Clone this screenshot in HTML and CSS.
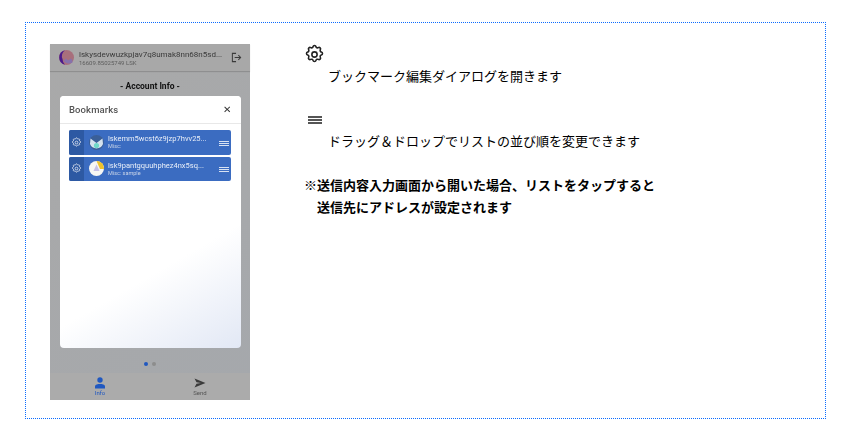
FILE: index.html
```html
<!DOCTYPE html>
<html lang="ja">
<head>
<meta charset="utf-8">
<title>Bookmarks</title>
<link rel="stylesheet" href="styles.css">
</head>
<body>
<main class="panel">
  <section class="phone">
    <header class="topbar">
      <svg class="avatar" viewBox="0 0 15 15"><circle cx="7.500" cy="7.500" r="7.500" fill="#a86f7c"/><path d="M6 .2A7.500 7.500 0 0 0 6 14.800 8 8 0 0 1 3.500 9 7 7 0 0 1 6 .2Z" fill="#4b1a8c"/><path d="M4.500 11a7 7 0 0 0 9 1.500 5 5 0 0 0-1.500-4l-3 2-2-2Z" fill="#8672ac"/></svg>
      <div class="acct">
        <div class="acct-addr">lskysdevwuzkpjav7q8umak8nn68n5sd...</div>
        <div class="acct-bal">16609.85025749 LSK</div>
      </div>
      <svg class="logout" viewBox="0 0 24 24" fill="none" stroke="#3a3a3a" stroke-width="2.200"><path d="M11 3H3v18h8M8 12h13M16 7l5 5-5 5"/></svg>
    </header>
    <div class="phone-title">- Account Info -</div>
    <div class="modal">
      <div class="modal-head"><span>Bookmarks</span><span class="close">✕</span></div>
      <div class="list">
        <div class="item">
          <div class="item-gear"><svg class="ico-gear" viewBox="0 0 24 24"><use href="#gear"/></svg></div>
          <svg class="item-ava" viewBox="0 0 15 15"><circle cx="7.500" cy="7.500" r="7.500" fill="#3a5f98"/><path d="M1.500 3.500 7.500 8 13.500 3.500 14 9a7 7 0 0 1-13 0Z" fill="#d4e2ee"/><circle cx="7.500" cy="10.500" r="2.600" fill="#6fd8c8"/></svg>
          <div class="item-text"><div class="item-addr">lskemm5wcst6z9jzp7hvv25...</div><div class="item-sub">Misc:</div></div>
          <div class="item-menu"><i></i><i></i><i></i></div>
        </div>
        <div class="item">
          <div class="item-gear"><svg class="ico-gear" viewBox="0 0 24 24"><use href="#gear"/></svg></div>
          <svg class="item-ava" viewBox="0 0 15 15"><circle cx="7.500" cy="7.500" r="7.500" fill="#f6f6f3"/><path d="M7.500 0A7.500 7.500 0 0 1 15 8H11Z" fill="#eec22c"/><path d="M7.500 3.500 10.500 10H4.500Z" fill="#c4bfe6"/></svg>
          <div class="item-text"><div class="item-addr">lsk9pantgquuhphez4nx5sq...</div><div class="item-sub">Misc: sample</div></div>
          <div class="item-menu"><i></i><i></i><i></i></div>
        </div>
      </div>
    </div>
    <div class="dots"><i class="dot on"></i><i class="dot"></i></div>
    <nav class="tabs">
      <div class="tab on">
        <svg viewBox="0 0 12 12"><circle cx="6" cy="3" r="2.700" fill="#2058c0"/><path d="M1 11.500V9.500C1 7.500 4 7 6 7s5 .5 5 2.500v2Z" fill="#2058c0"/></svg>
        <span>Info</span>
      </div>
      <div class="tab">
        <svg viewBox="0 0 12 12"><path d="M.5 1.500 11.500 6 .5 10.500 2.500 6.800 7 6 2.500 5.200Z" fill="#3a3a3a"/></svg>
        <span>Send</span>
      </div>
    </nav>
  </section>
  <section class="notes">
    <svg class="note-gear" viewBox="0 0 24 24"><use href="#gear"/></svg>
    <p class="note">ブックマーク編集ダイアログを開きます</p>
    <div class="note-menu"><i></i><i></i><i></i></div>
    <p class="note">ドラッグ＆ドロップでリストの並び順を変更できます</p>
    <p class="warn">※送信内容入力画面から開いた場合、リストをタップすると<br><span class="warn-indent">送信先にアドレスが設定されます</span></p>
  </section>
</main>
<svg class="defs" width="0" height="0">
  <symbol id="gear" viewBox="0 0 24 24"><g fill="none" stroke="currentColor" stroke-width="1.800" stroke-linejoin="round"><path d="M10.300 3.100c.4-1.800 3-1.800 3.400 0a1.750 1.750 0 0 0 2.600 1.100c1.500-.9 3.300.8 2.400 2.400a1.750 1.750 0 0 0 1.100 2.600c1.800.4 1.800 3 0 3.400a1.750 1.750 0 0 0-1.100 2.600c.9 1.500-.9 3.300-2.400 2.400a1.750 1.750 0 0 0-2.600 1.100c-.4 1.800-3 1.800-3.400 0a1.750 1.750 0 0 0-2.600-1.100c-1.500.9-3.300-.9-2.400-2.400a1.750 1.750 0 0 0-1.100-2.600c-1.800-.4-1.800-3 0-3.400a1.750 1.750 0 0 0 1.100-2.600c-.9-1.600.9-3.300 2.400-2.400a1.750 1.750 0 0 0 2.600-1.100Z"/><circle cx="12" cy="12" r="3"/></g></symbol>
</svg>
</body>
</html>
```
FILE: styles.css
```css
* { box-sizing: border-box; }
html, body { margin: 0; padding: 0; background: #fff; }
body { width: 851px; height: 441px; overflow: hidden; padding: 22px 25px; font-family: "Noto Sans CJK JP", sans-serif; color: #000; }
.defs { position: absolute; }
.panel { display: flex; width: 801px; height: 397px; border: 1px dotted #0a6cff; padding: 21px 0 0 24px; }
.phone { width: 200px; height: 356px; display: flex; flex-direction: column; flex: none; background: linear-gradient(135deg, #a9a9a9, #a5a8ac); font-family: Roboto, sans-serif; color: #222; filter: blur(.4px); }
.topbar { height: 27px; flex: none; display: flex; align-items: center; padding: 0 8px 0 9px; background: #a8a8a8; box-shadow: 0 1px 1px rgba(0,0,0,.15); }
.avatar { width: 15px; height: 15px; flex: none; }
.acct { flex: 1; margin-left: 5px; min-width: 0; }
.acct-addr { font-size: 8px; line-height: 9px; color: #3a3a3a; white-space: nowrap; }
.acct-bal { font-size: 6px; line-height: 7px; color: #5c5c5c; }
.logout { width: 11px; height: 11px; flex: none; margin-bottom: 1px; }
.phone-title { height: 25px; flex: none; display: flex; align-items: center; justify-content: center; font-size: 8.500px; font-weight: 700; color: #111; padding-top: 4px; }
.modal { height: 252px; flex: none; margin: 0 9px 0 9.500px; border-radius: 4px; background: linear-gradient(150deg, #fff 65%, #e2e8f5); overflow: hidden; }
.modal-head { height: 28px; display: flex; align-items: center; justify-content: space-between; padding: 0 10px 0 9.500px; font-size: 9.500px; font-weight: 500; color: #555; letter-spacing: .1px; border-bottom: 1px solid #e8e8e8; background: #fff; }
.close { font-size: 10px; color: #333; }
.list { padding: 6px 10px 0 9.500px; display: flex; flex-direction: column; gap: 2px; }
.item { height: 24.500px; display: flex; align-items: center; background: #3b6cc1; border-radius: 2px; overflow: hidden; }
.item-gear { width: 15px; height: 100%; flex: none; display: flex; align-items: center; justify-content: center; background: #2d59a3; }
.ico-gear { width: 11px; height: 11px; color: #dfe6f2; }
.item-ava { width: 15px; height: 15px; flex: none; margin: 0 4.500px; }
.item-text { flex: 1; min-width: 0; }
.item-addr { font-size: 7.500px; line-height: 9px; color: #e8eef8; white-space: nowrap; }
.item-sub { font-size: 5.500px; line-height: 7px; color: #c8d4e8; }
.item-menu { width: 10px; margin: 2px 2.500px 0 0; display: flex; flex-direction: column; gap: 1px; flex: none; }
.item-menu i { display: block; height: 1px; background: #d8e2f2; }
.dots { height: 25px; flex: none; display: flex; align-items: center; justify-content: center; gap: 4px; padding-top: 7px; }
.dot { width: 4px; height: 4px; border-radius: 50%; background: #8d8d8d; }
.dot.on { background: #2058c0; }
.tabs { flex: 1; display: flex; background: #ababab; }
.tab { flex: 1; display: flex; flex-direction: column; align-items: center; padding-top: 4px; font-size: 6px; line-height: 7px; color: #555; }
.tab svg { width: 12px; height: 12px; }
.tab.on { color: #2058c0; }
.notes { margin-left: 54px; flex: 1; font-size: 13px; line-height: 19px; }
.note-gear { display: block; width: 21px; height: 21px; color: #222; }
.note { margin: 1px 0 0 24px; }
.note-menu { width: 14px; margin: 31px 0 0 4px; display: flex; flex-direction: column; gap: 1px; }
.note-menu i { display: block; height: 2px; background: #555; }
.note-menu + .note { margin-top: 7px; }
.warn { margin: 24px 0 0 0; font-weight: 700; line-height: 22px; }
.warn-indent { margin-left: 13px; }
```
